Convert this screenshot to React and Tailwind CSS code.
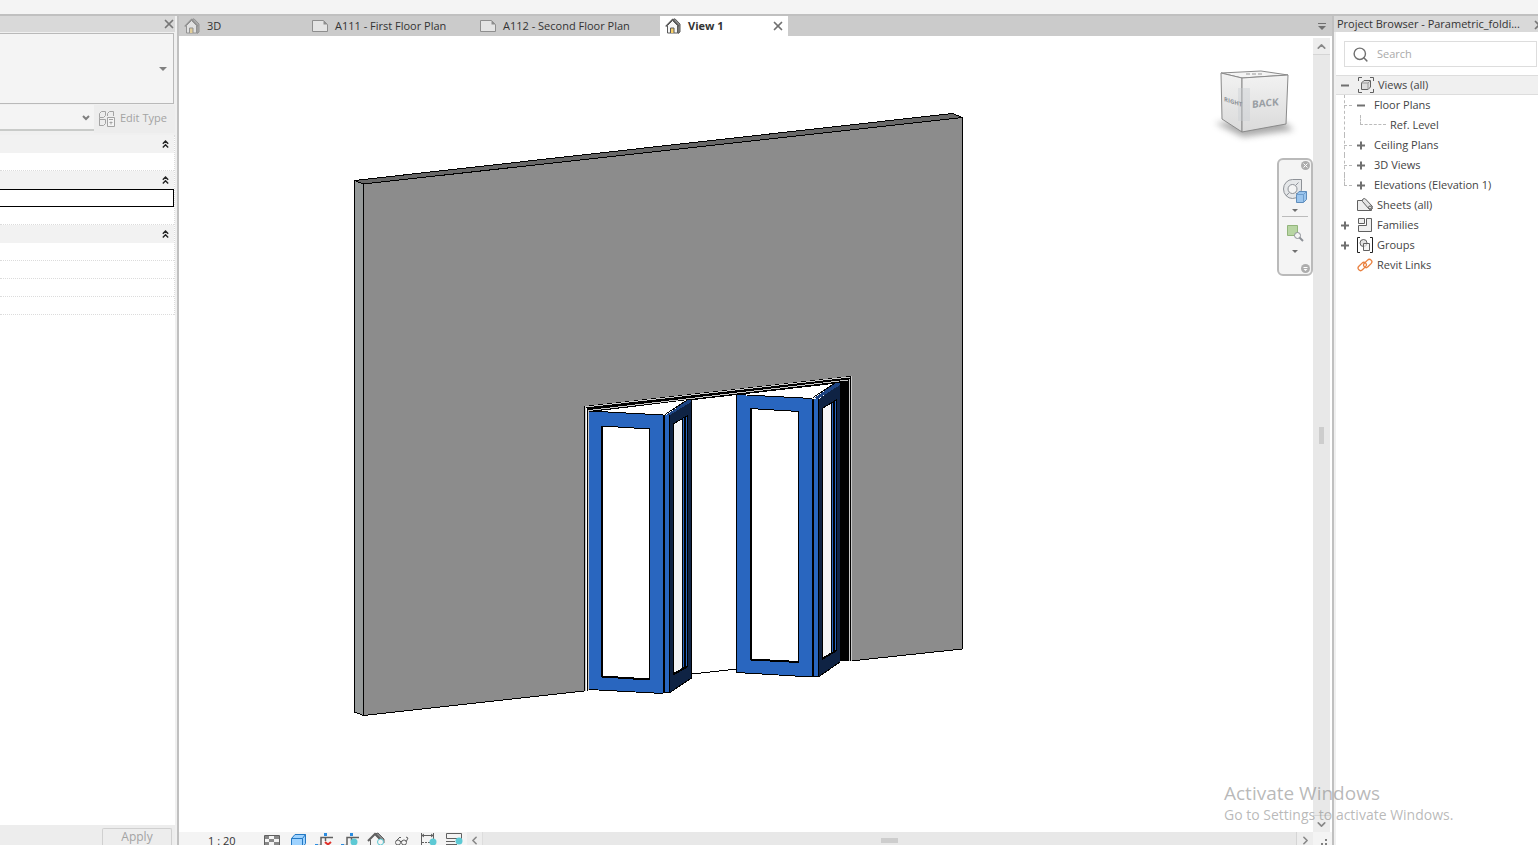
import { X, ChevronUp, ChevronDown, ChevronLeft, ChevronRight, Search } from 'lucide-react'

const tabs = [
  { label: '3D', icon: 'home', width: 'w-[128px]' },
  { label: 'A111 - First Floor Plan', icon: 'sheet', width: 'w-[168px]' },
  { label: 'A112 - Second Floor Plan', icon: 'sheet', width: 'w-[180px]' },
]

const propertyRows = [
  { kind: 'head' },
  { kind: 'row' },
  { kind: 'head' },
  { kind: 'active' },
  { kind: 'row' },
  { kind: 'head' },
  { kind: 'row' },
  { kind: 'row' },
  { kind: 'row' },
  { kind: 'row' },
]

function HomeIcon({ muted }) {
  return (
    <svg width="16" height="16" viewBox="0 0 16 16" className={muted ? 'shrink-0 opacity-50' : 'shrink-0'} fill="none">
      <path d="M8 1.500 10 .8l5 5.200v8l-2 1.500V8z" fill="#909090" stroke="#5a5a5a" />
      <path d="M2.500 7.500v7.500h10V7.500L7.500 2.500z" fill="#f7f7f7" stroke="#5a5a5a" />
      <path d="m.7 8.500 6.800-7 6.500 6.800" stroke="#5a5a5a" strokeWidth="1.300" />
      <path d="M5.500 15v-5h3.500v5" fill="#f7cf69" stroke="#5a5a5a" />
    </svg>
  )
}

function SheetIcon() {
  return (
    <svg width="16" height="12" viewBox="0 0 16 12" className="shrink-0">
      <path d="M.5.5h11l4 4v7H.5z" fill="#e4e4e4" stroke="#8e8e8e" />
      <path d="M11.500.5v4h4z" fill="#8e8e8e" />
    </svg>
  )
}

function DoubleChevron() {
  return (
    <svg width="7" height="8" viewBox="0 0 7 8" fill="none" stroke="#222" strokeWidth="1.400">
      <path d="M.8 3.700 3.500 1l2.700 2.700M.8 7.500l2.700-2.700 2.700 2.700" />
    </svg>
  )
}

function EditTypeIcon() {
  return (
    <svg width="16" height="16" viewBox="0 0 16 16" fill="none" stroke="#a3a3a3" className="shrink-0">
      <path d="M.5 6.500v-4l2-2h4v4l-2 2zM8.500 5V2.500l2-2h4V5M.5 8.500h6v4l-2 2h-4zM.5 6.500v8" />
      <path d="M8.500 6.500h7v9h-7z" fill="#f4f4f4" />
      <path d="M10 8.500h4M10.500 11.500h3M12 10.500v3" />
    </svg>
  )
}

function Properties() {
  return (
    <aside className="flex w-[179px] shrink-0 flex-col border-r-2 border-[#c0c0c0] bg-[#f0f0f0] pr-[2px]">
      <div className="flex h-4 shrink-0 items-center justify-end bg-[#d9d9d9]">
        <button aria-label="Close properties" className="-mr-px"><X size={14} strokeWidth={3} color="#777" /></button>
      </div>
      <button aria-label="Type selector" className="mt-px mr-px flex h-[71px] shrink-0 items-center justify-end border border-l-0 border-[#b9b9b9] bg-[#f4f4f4] pr-[6px]">
        <svg width="8" height="4" viewBox="0 0 8 4"><path d="M0 0h8L4 4z" fill="#808080" /></svg>
      </button>
      <div className="flex h-[31px] shrink-0 items-start pt-px">
        <div className="relative h-[26px] flex-1">
          <select aria-label="Instance" className="h-full w-full appearance-none border-b-2 border-[#c9cbc9] bg-[#f4f4f4]">
            <option></option>
          </select>
          <svg width="8" height="6" viewBox="0 0 8 6" className="pointer-events-none absolute top-[10px] right-1" fill="none" stroke="#808080" strokeWidth="2">
            <path d="m1 1 3 3 3-3" />
          </svg>
        </div>
        <button className="flex h-7 w-[81px] items-center gap-[5px] bg-[#ededed] pb-px pl-[5px] text-[11px] text-[#a3a3a3]">
          <EditTypeIcon />
          Edit Type
        </button>
      </div>
      <div className="flex-1 bg-white">
        <div className="border-r border-dotted border-[#dcdcdc]">
          {propertyRows.map((row, i) => {
            if (row.kind === 'head') {
              return (
                <div key={i} className="flex h-[18px] items-center justify-end bg-[#f2f2f2] pr-[5px]">
                  <button aria-label="Collapse group"><DoubleChevron /></button>
                </div>
              )
            }
            if (row.kind === 'active') {
              return <input key={i} aria-label="Value" className="block h-[18px] w-full border border-l-0 border-black bg-white outline-none" />
            }
            return <div key={i} className="h-[18px] border-b border-dotted border-[#dcdcdc]" />
          })}
        </div>
      </div>
      <div className="flex h-5 shrink-0 justify-end bg-[#ededed] pt-[3px] pr-[3px]">
        <button className="h-[17px] w-[70px] rounded-t-xs border border-b-0 border-[#d0d0d0] text-[12px] leading-4 text-[#a3a3a3]">Apply</button>
      </div>
    </aside>
  )
}

function TabBar() {
  return (
    <div className="flex h-5 shrink-0 bg-[#cbcbcb] pl-[5px] text-[11px] text-[#333]">
      {tabs.map((tab) => (
        <button key={tab.label} className={`flex shrink-0 items-center gap-[7px] ${tab.width}`}>
          {tab.icon === 'home' ? <HomeIcon muted /> : <SheetIcon />}
          <span className="pt-px">{tab.label}</span>
        </button>
      ))}
      <div className="flex w-[128px] shrink-0 items-center bg-white pr-[3px] pl-[5px]">
        <button className="flex flex-1 items-center gap-[7px] font-bold">
          <HomeIcon />
          <span className="pt-px">View 1</span>
        </button>
        <button aria-label="Close view"><X size={14} strokeWidth={3} color="#707070" /></button>
      </div>
      <button aria-label="Tab list" className="ml-auto pt-px pr-[6px]">
        <svg width="8" height="7" viewBox="0 0 8 7" fill="#707070"><path d="M0 0h8v1H0zM0 3h8L4 7z" /></svg>
      </button>
    </div>
  )
}

function FoldingDoorModel() {
  return (
    <svg viewBox="179 36 1134 796" className="block h-full w-full" fill="none" stroke="#000" shapeRendering="crispEdges">
      {/* wall */}
      <path d="M354.500 180.500 952.500 113.500 962.500 117.500 363.500 184z" fill="#686868" />
      <path d="M354.500 180.500 363.500 184V715.500L354.500 712z" fill="#959999" />
      <path d="M363.500 184 962.500 117.500V649L850.500 661V377L584.500 407V691L363.500 715.500z" fill="#8c8c8c" />

      {/* frame */}
      <path d="M585 406 850 376V382L589 412z" fill="#000" stroke="none" />
      <path d="M840 382h9v279h-9z" fill="#000" stroke="none" />
      <path d="M585.500 691V407L850 377" stroke="#c8c8c8" />
      <path d="M588.500 690V410.500L848 380" stroke="#c8c8c8" />
      <path d="M587 691V409L849 379" />
      <path d="M584.500 691V406" />
      <path d="M849.500 379V661M851.500 376V661" stroke="#c8c8c8" />
      <path d="M850.500 377V661" />
      <path d="M692 674 737 669" />

      {/* left pair */}
      <path d="M600 411 688 400 665 415z" fill="#fff" stroke="none" />
      <path d="M589 411 663 415V693L589 689z" fill="#2966bf" stroke="none" />
      <path d="M589 411 663 415M589 689.500 663 693.500" />
      <path d="M602 426 649.500 429V679L602 676z" fill="#fff" />
      <path d="M602 426V676.500L649 679.500" strokeWidth="2" />
      <path d="M665 415h4v277h-4z" fill="#2966bf" stroke="none" />
      <path d="M670 415 691 401V678L670 692z" fill="#0f2344" stroke="none" />
      <path d="M666 415 688 400H691V402L670 415z" fill="#1d4483" stroke="none" />
      <path d="M665 414.500 688 399.500M691.500 400V678L670 692.500H663" />
      <path d="M663 415h2v278h-2zM669 415h1v277h-1z" fill="#000" stroke="none" />
      <path d="M674 424 682 419V668L674 673z" fill="#f4f4f6" stroke="none" />
      <path d="M673.500 424V675" />
      <path d="M673 424 688 415.500" />
      <path d="M682.500 419V669M684.500 418V668M685.500 417V667M687.500 416V667" />
      <path d="M683.500 418V668M686.500 417V666" stroke="#2966bf" />
      <path d="M673 674.500 688 666" strokeWidth="2" />

      {/* right pair */}
      <path d="M762 394 834 384 813 399z" fill="#fff" stroke="none" />
      <path d="M737 395 812 399V677L737 672z" fill="#2966bf" stroke="none" />
      <path d="M736.500 394V672.500L812 677M737 394.500 812 398.500" />
      <path d="M750 408.500 798.500 411.500V662L750 659z" fill="#fff" />
      <path d="M751 408.500V659.500L798 662" strokeWidth="2" />
      <path d="M814 399h4v277h-4z" fill="#2966bf" stroke="none" />
      <path d="M819 399 840 384V662L819 676z" fill="#0f2344" stroke="none" />
      <path d="M814 398 836 383H840V385L818 399z" fill="#1d4483" stroke="none" />
      <path d="M813 397.500 836 382.500M840 662 819 676.500H812" />
      <path d="M812 399h2v278h-2zM818 399h1v277h-1z" fill="#000" stroke="none" />
      <path d="M823 408 831 403V653L823 658z" fill="#f4f4f6" stroke="none" />
      <path d="M822.500 409V659" />
      <path d="M822 408.500 837 399.500" />
      <path d="M831.500 403V654M833.500 402V653M834.500 401V652M836.500 400V651" />
      <path d="M832.500 403V653M835.500 401V651" stroke="#2966bf" />
      <path d="M822 659 837 650" strokeWidth="2" />
    </svg>
  )
}

function ViewCube() {
  return (
    <svg width="100" height="80" viewBox="0 0 100 80" className="absolute top-[29px] right-[8px]">
      <defs>
        <filter id="cubeShadow" x="-30%" y="-50%" width="160%" height="200%"><feGaussianBlur stdDeviation="3" /></filter>
        <linearGradient id="cubeFace" x2="0" y2="1"><stop stopColor="#f2f2f2" /><stop offset="1" stopColor="#dadada" /></linearGradient>
      </defs>
      <path d="M10 58 38 72 89 65 72 52z" fill="#888" opacity=".7" filter="url(#cubeShadow)" />
      <g stroke="#8a8a8a" strokeWidth="1">
        <path d="M16 8 56 6 83 10 37 13z" fill="#f4f4f4" />
        <path d="M16 8 37 13V67L17 54z" fill="url(#cubeFace)" />
        <path d="M37 13 83 10 81 59 37 67z" fill="url(#cubeFace)" />
      </g>
      <path d="M33 23h12v33H33z" fill="#c9ced3" opacity=".4" />
      <path d="M41 9h4M47 9h4M53 9h4" stroke="#999" />
      <text transform="translate(47 43) skewY(-6)" className="fill-[#999ea3] text-[10px] font-bold">BACK</text>
      <text transform="translate(19 36) skewY(18)" className="fill-[#8d9297] text-[6px] font-bold">RIGHT</text>
    </svg>
  )
}

function NavBar() {
  return (
    <div className="absolute top-[122px] right-0 flex h-[118px] w-9 flex-col items-center rounded-md border-2 border-[#bababa] bg-[#f4f4f4] pr-px">
      <button aria-label="Close navigation bar" className="mt-px self-end">
        <svg width="9" height="9" viewBox="0 0 9 9"><circle cx="4.500" cy="4.500" r="4.500" fill="#adadad" /><path d="m2.500 2.500 4 4m0-4-4 4" stroke="#fff" /></svg>
      </button>
      <button aria-label="Steering wheel" className="mt-2">
        <svg width="26" height="26" viewBox="0 0 26 26" fill="none" stroke="#8d9197">
          <path d="M10.500 1.500h9V11a9 9.500 0 1 1-9-9.500z" fill="#e5e7e9" />
          <circle cx="10.500" cy="11" r="4.500" fill="#f4f4f4" />
          <path d="m4 18 3.300-3.500M13.500 7.500l3-3M13.500 14.500l2 2" />
          <path d="M14.500 16.500 17 13.500h7.500v8l-3 3h-7z" fill="#9bc5ed" stroke="#5f8dbc" />
          <path d="M14.500 16.500h7l3-3M21.500 16.500v8" stroke="#6e9dcc" />
        </svg>
      </button>
      <button aria-label="Wheel options" className="mt-[5px]">
        <svg width="6" height="3" viewBox="0 0 6 3"><path d="M0 0h6L3 3z" fill="#707070" /></svg>
      </button>
      <div className="mt-1 h-px w-[26px] shrink-0 bg-[#bbb]" />
      <button aria-label="Zoom region" className="mt-2">
        <svg width="18" height="17" viewBox="0 0 18 17" fill="none">
          <path d="M1.500.5h10v10h-10z" fill="#b8d5a3" stroke="#92b57b" />
          <circle cx="11.500" cy="10.500" r="3" fill="#f4f4f4" stroke="#8d9197" />
          <path d="m13.500 12.500 3.500 3.500" stroke="#8d9197" strokeWidth="2" />
        </svg>
      </button>
      <button aria-label="Zoom options" className="mt-2">
        <svg width="6" height="3" viewBox="0 0 6 3"><path d="M0 0h6L3 3z" fill="#707070" /></svg>
      </button>
      <button aria-label="Customize" className="mt-auto mb-px self-end">
        <svg width="9" height="9" viewBox="0 0 9 9"><circle cx="4.500" cy="4.500" r="4.500" fill="#adadad" /><path d="M2.500 3h4v1h-4zM2.500 5h4l-2 2z" fill="#fff" /></svg>
      </button>
    </div>
  )
}

function ViewIcon({ name }) {
  return (
    <svg width="18" height="16" viewBox="0 0 18 16" fill="none" stroke="#606060" className="shrink-0">
      {name === 'detail' && (
        <>
          <path d="M1.500 3.500h15v10h-15z" fill="#f4f4f4" />
          <path d="M2 4h4v3H2zM11 4h5v3h-5zM6 7h5v3H6zM2 10h4v3H2zM11 10h5v3h-5z" fill="#888" stroke="none" />
        </>
      )}
      {name === 'style' && (
        <>
          <path d="M2.500 6.500 6 2.500h10.500v9l-3 4h-11z" fill="#9fd3ff" stroke="#2479c4" />
          <path d="M2.500 6.500h11l3-4M13.500 6.500v9" stroke="#2479c4" />
        </>
      )}
      {(name === 'crop' || name === 'cropShow') && (
        <>
          <path d="M6 15V5.500H18M1 13.500h5M10.500 5v4" strokeWidth="1.500" />
          <path d="M9 1h3v3H9zM0 12h3v3H0z" fill="#2b8ce0" stroke="none" />
          {name === 'crop'
            ? <path d="m10 10 6 5m0-5-6 5" stroke="#e0322b" strokeWidth="2" />
            : <circle cx="13" cy="10" r="3.500" fill="#5dc9d4" stroke="none" />}
        </>
      )}
      {name === 'home' && (
        <>
          <path d="M8 2 11 1l6 6v4l-3-2z" fill="#8a8a8a" />
          <path d="m1 9 7-7 6 6" strokeWidth="2" />
          <path d="M3.500 8v7h9V8" fill="#f4f4f4" />
          <circle cx="13.500" cy="10" r="3" fill="#f4f4f4" stroke="#5dc9d4" />
        </>
      )}
      {name === 'glasses' && (
        <>
          <circle cx="5" cy="10.500" r="2.500" /><circle cx="11" cy="10.500" r="2.500" />
          <path d="m3 9 4-4 1 1M13 10l2-4-2-1M7 9.500h2" />
        </>
      )}
      {name === 'dimensions' && (
        <>
          <path d="M2.500 1v14M14.500 1v6M2 3.500h12M5 2 3 3.500 5 5M12 2l2 1.500L12 5" />
          <path d="M3 10.500h8" strokeDasharray="2 1" />
          <circle cx="14" cy="10" r="3.500" fill="#5dc9d4" stroke="none" />
        </>
      )}
      {name === 'properties' && (
        <>
          <path d="M1.500 1.500h15v5h-15zM1 9.500h9M1 12.500h11" />
          <circle cx="14" cy="9" r="3.500" fill="#5dc9d4" stroke="none" />
        </>
      )}
    </svg>
  )
}

const viewControls = ['detail', 'style', 'crop', 'cropShow', 'home', 'glasses', 'dimensions', 'properties']

function Viewport() {
  return (
    <main className="flex min-w-0 flex-1 flex-col bg-white">
      <TabBar />
      <div className="flex min-h-0 flex-1">
        <div className="relative min-w-0 flex-1">
          <FoldingDoorModel />
          <ViewCube />
          <NavBar />
        </div>
        <div className="mt-[2px] mr-[2px] flex w-[17px] flex-col items-center justify-between bg-[#e8e8e8]">
          <button aria-label="Scroll up" className="flex h-[17px] w-full items-center justify-center border-b border-[#d5d5d5] bg-[#ededed]"><ChevronUp size={13} strokeWidth={3} color="#888" /></button>
          <div className="h-[17px] w-[5px] bg-[#cdcdcd]" />
          <button aria-label="Scroll down" className="flex h-[17px] w-full items-center justify-center border-t border-[#d5d5d5] bg-[#ededed]"><ChevronDown size={13} strokeWidth={3} color="#888" /></button>
        </div>
      </div>
      <div className="flex h-[13px] shrink-0 items-start bg-[#f4f4f4]">
        <button className="w-[84px] shrink-0 pt-[5px] pl-[29px] text-left text-[11px] leading-2 text-[#333]">1 : 20</button>
        <div className="flex h-[13px] w-[204px] shrink-0 justify-between overflow-hidden pr-[4px]">
          {viewControls.map((name) => (
            <button key={name} aria-label={name} className="h-4"><ViewIcon name={name} /></button>
          ))}
        </div>
        <div className="flex h-[17px] min-w-0 flex-1 items-center justify-between bg-[#e8e8e8]">
          <button aria-label="Scroll left" className="flex h-full w-4 items-center justify-center border-r border-[#ddd] bg-[#ededed]"><ChevronLeft size={13} strokeWidth={3} color="#888" /></button>
          <div className="h-[5px] w-[17px] bg-[#cdcdcd]" />
          <button aria-label="Scroll right" className="flex h-full w-[17px] items-center justify-center border-l border-[#d5d5d5] bg-[#ededed]"><ChevronRight size={13} strokeWidth={3} color="#888" /></button>
        </div>
        <svg width="19" height="13" viewBox="0 0 19 13" className="shrink-0" fill="#808080"><path d="M12 7h2v2h-2zM12 11h2v2h-2zM8 11h2v2H8z" /></svg>
      </div>
    </main>
  )
}

function TreeIcon({ name }) {
  return (
    <svg width="16" height="16" viewBox="0 0 16 16" fill="none" stroke="#606060" className="shrink-0">
      {name === 'views' && (
        <>
          <path d="M4 .5H.5V4M12 .5h3.500V4M4 15.500H.5V12M12 15.500h3.500V12" />
          <path d="M3.500 6 6 3.500h6.500V10L10 12.500H3.500z" fill="#ddd" />
          <path d="M3.500 6H10l2.500-2.500M10 6v6.500" stroke="#999" />
        </>
      )}
      {name === 'sheets' && (
        <>
          <path d="M6 3.500H.5v10h14V11" fill="#eee" />
          <path d="M5.500 4.500a2 2 0 0 1 3-2.500l6.500 7a2 2 0 0 1-3 3z" fill="#e3e3e3" />
          <circle cx="13" cy="10.500" r="1.500" />
        </>
      )}
      {name === 'families' && <path d="M1.500 1.500h6v5h-6zM9.500 1.500h5v13h-13v-6h8z" fill="#f0f0f0" />}
      {name === 'groups' && (
        <>
          <path d="M3 .5H.5v15H3M13 .5h2.500v15H13" stroke="#222" />
          <circle cx="6.500" cy="6" r="3.500" fill="#e3e3e3" />
          <path d="M6.500 6.500h6v7h-6z" fill="#f0f0f0" fillOpacity=".7" />
        </>
      )}
      {name === 'links' && (
        <g stroke="#e98140" strokeWidth="1.300">
          <rect x="6" y="4" width="9.500" height="5" rx="2.500" transform="rotate(-45 10.700 6.500)" />
          <rect x="0.500" y="7" width="9.500" height="5" rx="2.500" transform="rotate(-45 5.200 9.500)" />
        </g>
      )}
    </svg>
  )
}

function Toggle({ open }) {
  return (
    <button aria-label={open ? 'Collapse' : 'Expand'} className="flex w-[9px] shrink-0 justify-center">
      <svg width="9" height="9" viewBox="0 0 9 9" fill="#707070">
        <path d="M1 3.500h8v2H1z" />
        {!open && <path d="M4 .5h2v8H4z" />}
      </svg>
    </button>
  )
}

const viewGroups = [
  { label: 'Floor Plans', open: true, children: ['Ref. Level'] },
  { label: 'Ceiling Plans' },
  { label: '3D Views' },
  { label: 'Elevations (Elevation 1)' },
]

const roots = [
  { label: 'Sheets (all)', icon: 'sheets' },
  { label: 'Families', icon: 'families', expandable: true },
  { label: 'Groups', icon: 'groups', expandable: true },
  { label: 'Revit Links', icon: 'links' },
]

function ProjectBrowser() {
  return (
    <aside className="flex w-[206px] shrink-0 flex-col border-l-2 border-[#c0c0c0] bg-white text-[11px] text-[#444]">
      <div className="flex h-4 shrink-0 items-center bg-[#d9d9d9] pt-px pl-[3px]">
        <span className="flex-1 whitespace-nowrap text-[#333]">Project Browser - Parametric_foldi...</span>
        <button aria-label="Close browser" className="-mr-2 shrink-0"><X size={14} strokeWidth={3} color="#777" /></button>
      </div>
      <div className="flex flex-1 flex-col border-l-2 border-[#f0f0f0]">
        <label className="mt-[9px] mr-px ml-2 flex h-[26px] items-center gap-2 border border-[#ddd] pl-[7px]">
          <Search size={17} strokeWidth={2} color="#707070" />
          <input placeholder="Search" aria-label="Search" className="min-w-0 flex-1 pt-px outline-none placeholder:text-[#aaa]" />
        </label>
        <ul className="mt-2 leading-5">
          <li>
            <div className="flex h-5 items-center gap-[9px] border-y border-[#ddd] bg-[#f0f0f0] pl-1">
              <Toggle open />
              <span className="flex items-center gap-1"><TreeIcon name="views" />Views (all)</span>
            </div>
            <ul className="ml-2">
              {viewGroups.map((group, i) => (
                <li key={group.label} className="relative">
                  <span className={i === viewGroups.length - 1 ? 'absolute top-0 left-0 h-[10px] border-l border-dashed border-[#bbb]' : 'absolute top-0 left-0 h-full border-l border-dashed border-[#bbb]'} />
                  <div className="flex h-5 items-center">
                    <span className="mr-1 w-2 border-t border-dashed border-[#bbb]" />
                    <Toggle open={group.open} />
                    <span className="ml-[9px]">{group.label}</span>
                  </div>
                  {group.children?.map((child) => (
                    <div key={child} className="flex h-5 pl-4">
                      <span className="mr-1 h-[10px] w-[26px] border-b border-l border-dashed border-[#bbb]" />
                      {child}
                    </div>
                  ))}
                </li>
              ))}
            </ul>
          </li>
          {roots.map((root) => (
            <li key={root.label} className="flex h-5 items-center gap-2 pl-1">
              {root.expandable ? <Toggle /> : <span className="w-[9px]" />}
              <span className="flex items-center gap-1"><TreeIcon name={root.icon} />{root.label}</span>
            </li>
          ))}
        </ul>
      </div>
    </aside>
  )
}

export default function App() {
  return (
    <div className="relative flex h-screen flex-col overflow-hidden font-['Open_Sans','Noto_Sans',sans-serif]">
      <div className="h-4 shrink-0 border-b-2 border-[#c0c0c0] bg-[#f4f4f4]" />
      <div className="flex min-h-0 flex-1">
        <Properties />
        <Viewport />
        <ProjectBrowser />
      </div>
      <div className="pointer-events-none absolute right-[78px] bottom-5 w-[236px] whitespace-nowrap text-[#8a8a8a]/60">
        <p className="text-[19px] leading-6">Activate Windows</p>
        <p className="text-[14px] leading-5">Go to Settings to activate Windows.</p>
      </div>
    </div>
  )
}
